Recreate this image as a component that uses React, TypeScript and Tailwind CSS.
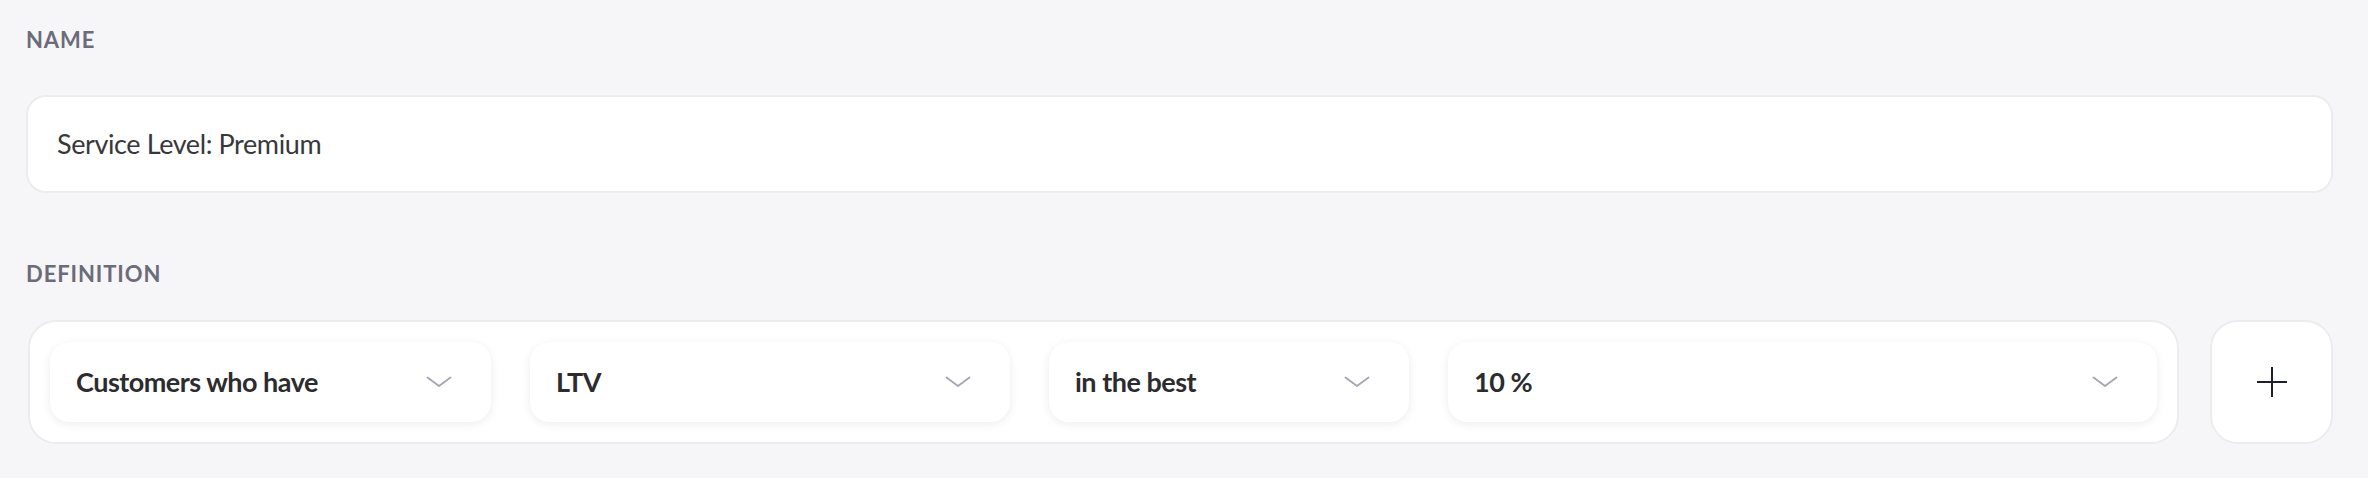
import React from "react";

function Chevron() {
  return (
    <svg width="26" height="12" viewBox="0 0 26 12" fill="none" className="shrink-0">
      <path d="M1.5 1.5 L13 10 L24.5 1.5" stroke="#a5a4b6" strokeWidth="1.8" strokeLinecap="round" strokeLinejoin="round" />
    </svg>
  );
}

function Select({ label, className }: { label: string; className: string }) {
  return (
    <div
      className={`flex h-[80px] items-center justify-between rounded-[20px] bg-white pl-[26px] pr-[39px] shadow-[0_2px_10px_rgba(30,30,50,0.08)] ${className}`}
    >
      <span className="text-[27px] font-bold text-[#2c2c2f] tracking-[-0.5px]">{label}</span>
      <Chevron />
    </div>
  );
}

export default function App() {
  return (
    <div
      className="min-h-[478px] w-full bg-[#f6f6f8] pl-[26px] pr-[35px] pt-[24px]"
      style={{ fontFamily: "Lato, 'Open Sans', sans-serif" }}
    >
      <div className="h-[32px] text-[22px] leading-[32px] font-bold uppercase tracking-[0.9px] text-[#6c6b79]">Name</div>
      <div className="mt-[39px] flex h-[98px] items-center rounded-[20px] border-2 border-[#ececef] bg-white px-[29px]">
        <span className="text-[27px] text-[#38383b] tracking-[-0.4px]">Service Level: Premium</span>
      </div>
      <div className="mt-[65px] h-[32px] text-[22px] leading-[32px] font-bold uppercase tracking-[0.9px] text-[#6c6b79]">Definition</div>
      <div className="mt-[30px] flex gap-[31px]">
        <div className="ml-[2px] flex h-[124px] flex-1 items-center gap-[39px] rounded-[28px] border-2 border-[#ececef] bg-white px-[20px]">
          <Select label="Customers who have" className="w-[441px]" />
          <Select label="LTV" className="w-[480px]" />
          <Select label="in the best" className="w-[360px]" />
          <Select label="10 %" className="flex-1" />
        </div>
        <button className="flex h-[124px] w-[123px] items-center justify-center rounded-[28px] border-2 border-[#ececef] bg-white">
          <svg width="32" height="32" viewBox="0 0 32 32" fill="none">
            <path d="M16 1 V31 M1 16 H31" stroke="#1f1f2e" strokeWidth="2" />
          </svg>
        </button>
      </div>
    </div>
  );
}
